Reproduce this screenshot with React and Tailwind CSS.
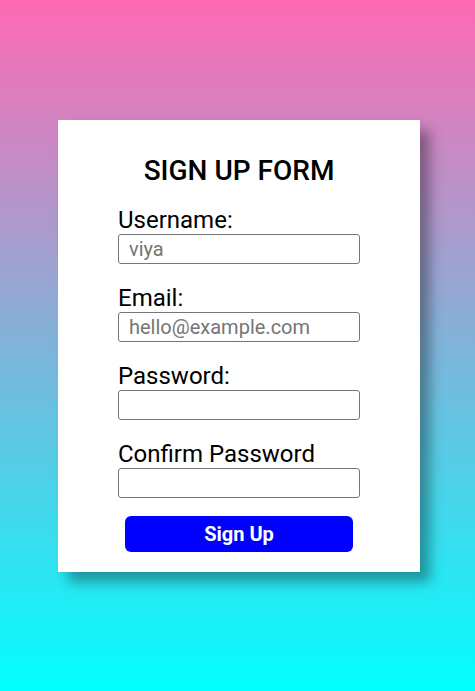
export default function App() {
  return (
    <div
      className="min-h-[691px] w-full flex items-center justify-center bg-[linear-gradient(#ff69b4,#00ffff)] pl-[3px]"
      style={{ fontFamily: "Roboto, 'Liberation Sans', sans-serif" }}
    >
      <div className="w-[362px] h-[452px] bg-white shadow-[10px_10px_12px_rgba(0,0,0,0.35)] flex flex-col items-center pt-[33px]">
        <h1 className="text-[28px] leading-[35px] font-medium text-black">SIGN UP FORM</h1>
        <form className="w-[242px] mt-[18px] flex flex-col">
          {[
            ["Username:", "viya"],
            ["Email:", "hello@example.com"],
            ["Password:", ""],
            ["Confirm Password", ""],
          ].map(([label, ph], i) => (
            <div key={i} className={i === 0 ? "" : "mt-[20px]"}>
              <label className="block text-[24px] leading-[28px] text-black">{label}</label>
              <input
                placeholder={ph}
                className="block w-[242px] h-[30px] border border-[#767676] rounded-[3px] px-[10px] text-[20px] placeholder:text-[#757575] outline-none"
              />
            </div>
          ))}
          <button
            type="button"
            className="mt-[18px] self-center w-[228px] h-[36px] bg-[#0000ff] rounded-[6px] text-white font-bold text-[20px]"
          >
            Sign Up
          </button>
        </form>
      </div>
    </div>
  );
}
